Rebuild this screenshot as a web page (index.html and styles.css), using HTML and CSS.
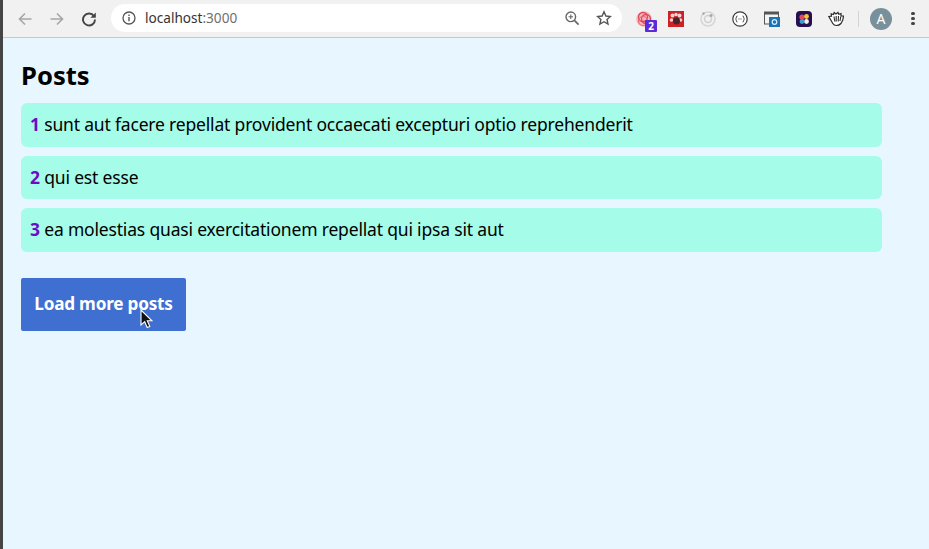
FILE: index.html
```html
<!DOCTYPE html>
<html lang="en">
<head>
  <meta charset="UTF-8">
  <meta name="viewport" content="width=device-width, initial-scale=1.0">
  <title>Posts</title>
  <link rel="stylesheet" href="styles.css">
</head>
<body>
  <div class="window">
    <!-- Browser toolbar -->
    <div class="toolbar">
      <div class="nav-buttons">
        <svg class="nav-icon" viewBox="0 0 16 16"><path d="M14.5 8H2.5M8 2.5 2.5 8 8 13.5" fill="none" stroke="#a5a6a7" stroke-width="1.6"/></svg>
        <svg class="nav-icon" viewBox="0 0 16 16"><path d="M1.5 8h12M8 2.5 13.5 8 8 13.5" fill="none" stroke="#a5a6a7" stroke-width="1.6"/></svg>
        <svg class="nav-icon" viewBox="0 0 16 16"><path d="M13 5.2A6 6 0 1 0 14 8.5" fill="none" stroke="#444" stroke-width="1.9"/><path d="M14.8 1.4v5.4H9.4z" fill="#444"/></svg>
      </div>
      <div class="address-bar">
        <svg class="info-icon" viewBox="0 0 14 14"><circle cx="7" cy="7" r="6" fill="none" stroke="#555" stroke-width="1.3"/><path d="M7 6v4.2M7 3.6v1.3" stroke="#555" stroke-width="1.4"/></svg>
        <span class="url">localhost<span class="url-port">:3000</span></span>
        <svg class="bar-icon" viewBox="0 0 16 16"><circle cx="6.8" cy="6.8" r="4.8" fill="none" stroke="#666" stroke-width="1.4"/><path d="M10.4 10.4 14.6 14.6" stroke="#666" stroke-width="1.7"/><path d="M4.6 6.8h4.4M6.8 4.6V9" stroke="#666" stroke-width="1.1"/></svg>
        <svg class="bar-icon" viewBox="0 0 16 16"><path d="M8 1.8 9.9 6l4.5.5-3.4 3 1 4.5L8 11.7 3.9 14l1-4.5-3.4-3L6.1 6z" fill="none" stroke="#555" stroke-width="1.4"/></svg>
      </div>
      <div class="extensions">
        <div class="ext">
          <svg class="ext-icon" viewBox="0 0 16 16"><circle cx="8" cy="8" r="7.8" fill="#f7b4bb"/><circle cx="7" cy="6" r="4.5" fill="none" stroke="#df4a5c" stroke-width="1.3"/><circle cx="10" cy="8" r="4.5" fill="none" stroke="#df4a5c" stroke-width="1.3"/><circle cx="7" cy="10" r="4.5" fill="none" stroke="#e56a78" stroke-width="1.2"/></svg>
          <span class="ext-badge">2</span>
        </div>
        <div class="ext">
          <svg class="ext-icon" viewBox="0 0 16 16"><rect width="16" height="16" fill="#cf2027"/><circle cx="4.5" cy="4.5" r="2" fill="#f4d5d5"/><circle cx="11.5" cy="4.5" r="2" fill="#f4d5d5"/><circle cx="8" cy="3.5" r="1.7" fill="#f4d5d5"/><circle cx="3.5" cy="9" r="1.8" fill="#f4d5d5"/><circle cx="12.5" cy="9" r="1.8" fill="#f4d5d5"/><circle cx="8.5" cy="10" r="3.5" fill="#4a2428"/></svg>
        </div>
        <div class="ext">
          <svg class="ext-icon" viewBox="0 0 16 16"><circle cx="8" cy="8" r="7" fill="none" stroke="#d5d5d3" stroke-width="1.5"/><circle cx="8" cy="8" r="3.5" fill="none" stroke="#d0d0ce" stroke-width="1.5"/><circle cx="11" cy="4.5" r="1.5" fill="#a8a8a8"/><circle cx="3.5" cy="2.5" r="1.2" fill="#a8a8a8"/></svg>
        </div>
        <div class="ext">
          <svg class="ext-icon" viewBox="0 0 16 16"><circle cx="8" cy="8" r="7.2" fill="#fff" stroke="#3a3a3a" stroke-width="1.2"/><path d="M5.5 5Q4.3 5 4.3 6.2V7.3L3.5 8l.8.7v1.1Q4.3 11 5.5 11M10.5 5q1.2 0 1.2 1.2v1.1l.8.7-.8.7v1.1Q11.7 11 10.5 11" fill="none" stroke="#3a3a3a" stroke-width=".9"/><path d="M6.5 8h3" stroke="#3a3a3a" stroke-width="1" stroke-dasharray="1 1"/></svg>
        </div>
        <div class="ext">
          <svg class="ext-icon" viewBox="0 0 16 16"><rect x=".5" y="1" width="14" height="12" fill="#f4f4f4" stroke="#555"/><rect x=".5" y="1" width="14" height="2.5" fill="#555"/><rect x="5" y="6" width="11" height="10" fill="#1a73b8"/><circle cx="10.5" cy="11" r="2.3" fill="none" stroke="#d8ecf8" stroke-width="1.2"/></svg>
        </div>
        <div class="ext">
          <svg class="ext-icon" viewBox="0 0 16 16"><rect width="16" height="16" rx="4" fill="#24104f"/><circle cx="6" cy="6" r="2.6" fill="#e8465a"/><circle cx="10.5" cy="5.5" r="2.4" fill="#f5c242"/><circle cx="10.5" cy="10.5" r="2.4" fill="#f2f0e8"/><circle cx="6" cy="10.5" r="2.4" fill="#3aa0d8"/></svg>
        </div>
        <div class="ext">
          <svg class="ext-icon" viewBox="0 0 16 16"><path d="M.8 5.5 3.5 5.2 3.2 2.800 5.5 3.5 6.200 1.500 8 3 10 1.500 10.800 3.200 13 2.500 13 5 15.500 5 14.800 9 13 12.500Q11 14.500 8.500 14.500 6 14.500 4.800 12.500z" fill="#fff" stroke="#2a2a2a" stroke-width="1.2"/><path d="M6 5.500l.8 5M8.200 5v5.500M10.500 5l-.3 5.500M12.800 5.500l-.8 4.500" stroke="#2a2a2a" stroke-width="1.1"/></svg>
        </div>
      </div>
      <div class="toolbar-divider"></div>
      <div class="avatar">A</div>
      <div class="menu-dots"><span></span><span></span><span></span></div>
    </div>

    <!-- Page content -->
    <main class="page">
      <h1 class="heading">Posts</h1>
      <ul class="post-list">
        <li class="post"><strong class="post-id">1</strong> sunt aut facere repellat provident occaecati excepturi optio reprehenderit</li>
        <li class="post"><strong class="post-id">2</strong> qui est esse</li>
        <li class="post"><strong class="post-id">3</strong> ea molestias quasi exercitationem repellat qui ipsa sit aut</li>
      </ul>
      <div class="button-wrap">
        <button class="load-more">Load more posts</button>
        <svg class="cursor" viewBox="0 0 13 20"><path d="M1 1v15l3.700-3.300 2.500 5.800 2.600-1.100-2.500-5.600H12z" fill="#111" stroke="#fff" stroke-width="1.1"/></svg>
      </div>
    </main>
  </div>
</body>
</html>
```

FILE: styles.css
```css
/* Base */
html,
body {
  height: 100%;
  margin: 0;
}

body {
  font-family: "Noto Sans", "Open Sans", sans-serif;
  overflow: hidden;
}

.window {
  display: flex;
  flex-direction: column;
  height: 100%;
  border-left: 3px solid #454545;
  box-sizing: border-box;
}

/* Browser toolbar */
.toolbar {
  display: flex;
  align-items: center;
  flex: none;
  height: 37px;
  background-color: #f1f1f1;
  border-bottom: 1px solid #c8c8c8;
  padding-left: 14px;
}

.nav-buttons {
  display: flex;
  gap: 16px;
  width: 94px;
}

.nav-icon {
  width: 16px;
  height: 16px;
}

.address-bar {
  display: flex;
  align-items: center;
  width: 511px;
  height: 28px;
  margin-bottom: 2px;
  padding: 0 10px 0 11px;
  box-sizing: border-box;
  background-color: #fff;
  border-radius: 14px;
}

.info-icon {
  width: 14px;
  height: 14px;
  margin-right: 9px;
}

.url {
  flex: 1;
  font-size: 13.6px;
  color: #333;
}

.url-port {
  color: #6f6f6f;
}

.bar-icon {
  width: 16px;
  height: 16px;
  margin-left: 16px;
}

.extensions {
  display: flex;
  gap: 16px;
  margin-left: 14px;
}

.ext {
  position: relative;
  width: 16px;
  height: 16px;
}

.ext-icon {
  display: block;
  width: 16px;
  height: 16px;
}

.ext-badge {
  position: absolute;
  left: 9px;
  top: 9px;
  width: 12px;
  height: 12px;
  background-color: #5a2bd8;
  border-radius: 1px;
  color: #fff;
  font-size: 10px;
  font-weight: 700;
  line-height: 12px;
  text-align: center;
}

.toolbar-divider {
  width: 1px;
  height: 16px;
  margin-left: 14px;
  background-color: #d4d4d4;
}

.avatar {
  width: 22px;
  height: 22px;
  margin-left: 11px;
  border-radius: 50%;
  background-color: #78909c;
  color: #fff;
  font-size: 14px;
  line-height: 22px;
  text-align: center;
}

.menu-dots {
  display: flex;
  flex-direction: column;
  gap: 1.5px;
  margin-left: 19px;
}

.menu-dots span {
  width: 3.5px;
  height: 3.5px;
  border-radius: 50%;
  background-color: #444;
}

/* Page content */
.page {
  flex: 1;
  background-color: #e7f6ff;
  padding: 20px 47px 0 18px;
}

.heading {
  margin: 0 0 9px;
  font-size: 25.6px;
  line-height: 36px;
  font-weight: 700;
  color: #000;
}

.post-list {
  display: flex;
  flex-direction: column;
  gap: 9px;
  margin: 0;
  padding: 0;
  list-style: none;
}

.post {
  height: 43.5px;
  padding-left: 9px;
  background-color: #a5fce8;
  border-radius: 6px;
  font-size: 17.5px;
  letter-spacing: -0.18px;
  line-height: 43.5px;
  color: #000;
}

.post-id {
  color: #6a0dc4;
}

.button-wrap {
  position: relative;
  margin-top: 26px;
}

.load-more {
  display: block;
  width: 165px;
  height: 53px;
  padding: 0 0 2px;
  border: none;
  border-radius: 2px;
  background-color: #3f6fd0;
  color: #fff;
  font-family: inherit;
  font-size: 17.2px;
  letter-spacing: -0.23px;
  font-weight: 700;
}

.cursor {
  position: absolute;
  left: 119px;
  top: 31px;
  width: 13px;
  height: 20px;
}
```
